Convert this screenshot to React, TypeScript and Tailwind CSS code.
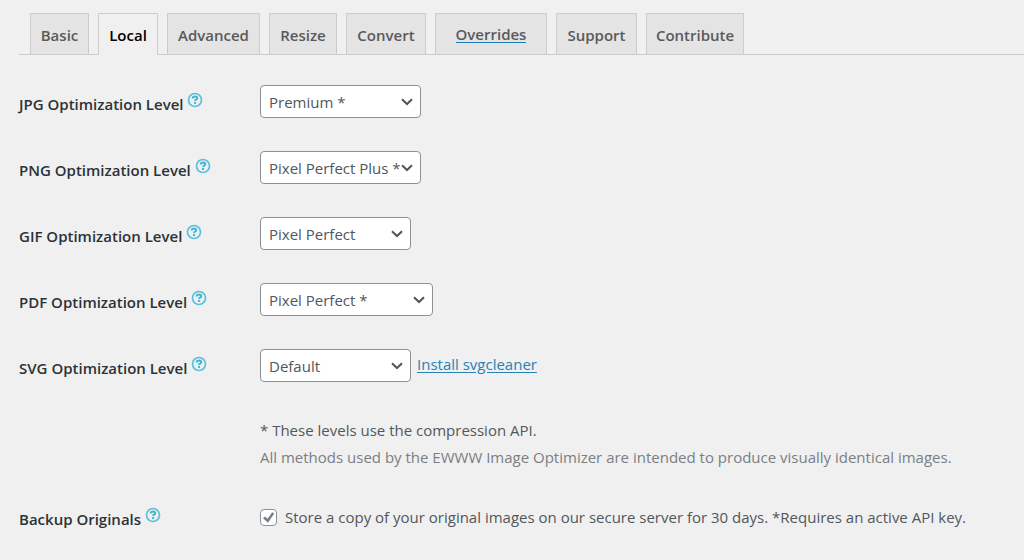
import type { ReactNode } from "react";

type Tab = { label: string; width: string; active?: boolean; href?: string };

const tabs: Tab[] = [
  { label: "Basic", width: "w-[59px]" },
  { label: "Local", width: "w-[60px]", active: true },
  { label: "Advanced", width: "w-[93px]" },
  { label: "Resize", width: "w-[68px]" },
  { label: "Convert", width: "w-[80px]" },
  { label: "Overrides", width: "w-[112px]", href: "#overrides" },
  { label: "Support", width: "w-[81px]" },
  { label: "Contribute", width: "w-[98px]" },
];

const levels = [
  { id: "jpg", name: "JPG", value: "Premium *", width: "w-[161px]" },
  { id: "png", name: "PNG", value: "Pixel Perfect Plus *", width: "w-[161px]" },
  { id: "gif", name: "GIF", value: "Pixel Perfect", width: "w-[151px]" },
  { id: "pdf", name: "PDF", value: "Pixel Perfect *", width: "w-[173px]" },
  { id: "svg", name: "SVG", value: "Default", width: "w-[151px]" },
];

function HelpIcon() {
  return (
    <svg viewBox="0 0 16 16" className="size-4" fill="none" aria-hidden="true">
      <circle cx="8" cy="8" r="6.5" stroke="#5bc0de" strokeWidth="1.7" />
      <path
        d="M5.7 6.500C5.800 5.200 6.700 4.600 8 4.600c1.400 0 2.200.6 2.200 1.600 0 1.400-2.100 1.300-2.100 2.900"
        stroke="#41b3d3"
        strokeWidth="2"
      />
      <rect x="7" y="10" width="2.100" height="1.900" fill="#41b3d3" />
    </svg>
  );
}

function LabelCell({ htmlFor, children }: { htmlFor: string; children: ReactNode }) {
  return (
    <div className="flex w-[241px] shrink-0 items-start gap-1 font-semibold text-[#2c3237]">
      <label htmlFor={htmlFor} className="pt-1">
        {children}
      </label>
      <a href="#help" aria-label="Help" className="pt-0.5">
        <HelpIcon />
      </a>
    </div>
  );
}

function LevelSelect({ id, value, width }: { id: string; value: string; width: string }) {
  return (
    <div className={`relative ${width}`}>
      <select
        id={id}
        defaultValue={value}
        className="h-[33px] w-full appearance-none rounded-[4px] border border-[#8c9196] bg-white pr-4 pl-2 text-[#50575d]"
      >
        <option>{value}</option>
      </select>
      <svg
        viewBox="0 0 14 8"
        className="pointer-events-none absolute top-[13px] right-[7px] h-2 w-3.5"
        fill="none"
        aria-hidden="true"
      >
        <path d="M2 1.200l5 4.800 5-4.800" stroke="#50555a" strokeWidth="2" />
      </svg>
    </div>
  );
}

function TabItem({ tab }: { tab: Tab }) {
  const box = "-mb-px flex h-[42px] items-center justify-center border border-[#ccc] pt-0.5";
  if (tab.href) {
    return (
      <a href={tab.href} className={`${box} bg-[#e4e4e4] text-[#5a5a5a] ${tab.width}`}>
        <span className="border-b border-[#1a7db5] leading-[15px]">{tab.label}</span>
      </a>
    );
  }
  return (
    <button
      type="button"
      className={`${box} ${tab.width} ${
        tab.active ? "border-b-[#f0f0f0] bg-[#f0f0f0] text-black" : "bg-[#e4e4e4] text-[#5a5a5a]"
      }`}
    >
      {tab.label}
    </button>
  );
}

export default function App() {
  return (
    <main className="min-h-screen bg-[#f0f0f0] pt-[13px] pl-[19px] font-['Open_Sans','Noto_Sans',sans-serif] text-[15px] leading-5 text-[#50575d]">
      <nav className="flex gap-[9px] border-b border-[#ccc] pl-[11px] font-semibold">
        {tabs.map((t) => (
          <TabItem key={t.label} tab={t} />
        ))}
      </nav>

      <form className="pt-[30px]">
        <div className="flex flex-col gap-[33px]">
          {levels.map((l) => (
            <div key={l.id} className="flex h-[33px] items-center">
              <LabelCell htmlFor={l.id}>{l.name} Optimization Level</LabelCell>
              <LevelSelect id={l.id} value={l.value} width={l.width} />
              {l.id === "svg" && (
                <a href="#svgcleaner" className="pb-1 pl-1.5 text-[#2683b5] underline underline-offset-2">
                  Install svgcleaner
                </a>
              )}
            </div>
          ))}
        </div>

        <div className="pt-[35px] pl-[241px] leading-[27px]">
          <p>* These levels use the compression API.</p>
          <p className="text-[#7a7f84]">
            All methods used by the EWWW Image Optimizer are intended to produce visually identical images.
          </p>
        </div>

        <div className="flex items-center pt-[34px]">
          <LabelCell htmlFor="backup">Backup Originals</LabelCell>
          <div className="flex items-center gap-2">
            <span className="relative flex">
              <input
                id="backup"
                type="checkbox"
                defaultChecked
                className="peer size-[17px] appearance-none rounded-[4px] border border-[#8c9196] bg-white"
              />
              <svg
                viewBox="0 0 17 17"
                className="pointer-events-none absolute inset-0 hidden size-[17px] peer-checked:block"
                aria-hidden="true"
              >
                <path d="M3 9.200l2.100-1.700 2.400 2.300 4.600-6.600 2.200 1.400-6.300 9.200z" fill="#787f88" />
              </svg>
            </span>
            <label htmlFor="backup">
              Store a copy of your original images on our secure server for 30 days. *Requires an active API key.
            </label>
          </div>
        </div>
      </form>
    </main>
  );
}
